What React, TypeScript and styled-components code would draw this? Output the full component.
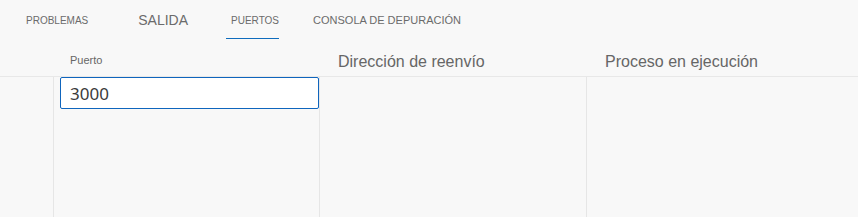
import styled, { createGlobalStyle } from "styled-components";

const GlobalStyle = createGlobalStyle`
  html, body {
    margin: 0;
    padding: 0;
    background: #f8f8f8;
  }
  body {
    font-family: "Liberation Sans", Arial, sans-serif;
  }
`;

type Tab = { label: string; size: number; gap: number; active?: boolean };

const tabs: Tab[] = [
  { label: "PROBLEMAS", size: 10, gap: 50 },
  { label: "SALIDA", size: 14, gap: 38 },
  { label: "PUERTOS", size: 10, gap: 34, active: true },
  { label: "CONSOLA DE DEPURACIÓN", size: 11, gap: 0 },
];

const App = () => {
  return (
    <>
      <GlobalStyle />
      <Panel>
        <TabBar>
          {tabs.map((t) => (
            <TabItem key={t.label} $size={t.size} $gap={t.gap} $active={t.active}>
              {t.label}
            </TabItem>
          ))}
        </TabBar>
        <Table>
          <HeadRow>
            <HeadCell />
            <HeadCell $small>Puerto</HeadCell>
            <HeadCell>Dirección de reenvío</HeadCell>
            <HeadCell>Proceso en ejecución</HeadCell>
          </HeadRow>
          <BodyRow>
            <Cell />
            <Cell $editing>
              <PortInput defaultValue="3000" />
            </Cell>
            <Cell />
            <Cell />
          </BodyRow>
        </Table>
      </Panel>
    </>
  );
};

export default App;

const Panel = styled.div`
  width: 858px;
  height: 217px;
  background: #f8f8f8;
  display: flex;
  flex-direction: column;
  overflow: hidden;
`;

const TabBar = styled.div`
  height: 40px;
  display: flex;
  align-items: stretch;
  padding-left: 26px;
  box-sizing: border-box;
`;

const TabItem = styled.div<{ $size: number; $gap: number; $active?: boolean }>`
  display: flex;
  align-items: center;
  box-sizing: border-box;
  height: 39px;
  padding-top: 2px;
  padding-left: ${(p) => (p.$active ? 5 : 0)}px;
  margin-right: ${(p) => p.$gap}px;
  font-size: ${(p) => p.$size}px;
  color: #6b6b6b;
  border-bottom: 1px solid ${(p) => (p.$active ? "#0f6cbd" : "transparent")};
`;

const Table = styled.div`
  flex: 1;
  display: flex;
  flex-direction: column;
`;

const columns = "54px 266px 267px 1fr";

const HeadRow = styled.div`
  display: grid;
  grid-template-columns: ${columns};
  height: 37px;
  border-bottom: 1px solid #e8e8e8;
  box-sizing: border-box;
`;

const HeadCell = styled.div<{ $small?: boolean }>`
  display: flex;
  align-items: ${(p) => (p.$small ? "flex-start" : "flex-end")};
  padding-left: ${(p) => (p.$small ? 16 : 18)}px;
  padding-top: ${(p) => (p.$small ? 14 : 0)}px;
  padding-bottom: ${(p) => (p.$small ? 0 : 5)}px;
  font-size: ${(p) => (p.$small ? 11 : 16)}px;
  color: #666666;
  box-sizing: border-box;
`;

const BodyRow = styled.div`
  flex: 1;
  display: grid;
  grid-template-columns: ${columns};
`;

const Cell = styled.div<{ $editing?: boolean }>`
  border-right: 1px solid #e6e6e6;
  box-sizing: border-box;
  padding-left: ${(p) => (p.$editing ? 6 : 0)}px;
  &:last-child {
    border-right: none;
  }
`;

const PortInput = styled.input`
  display: block;
  box-sizing: border-box;
  width: 259px;
  height: 32px;
  margin: 0;
  padding: 0 0 0 9px;
  border: 1px solid #0f65bd;
  border-radius: 2px;
  background: #ffffff;
  font-family: "Noto Sans", "Liberation Sans", sans-serif;
  font-size: 17px;
  color: #3b3b3b;
  outline: none;
`;
